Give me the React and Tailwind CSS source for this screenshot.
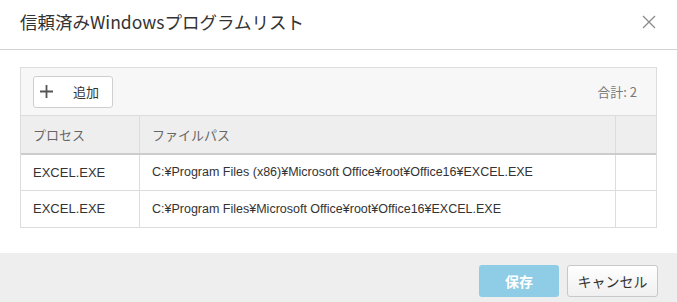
export default function App() {
  const rows = [
    ["EXCEL.EXE", "C:¥Program Files (x86)¥Microsoft Office¥root¥Office16¥EXCEL.EXE"],
    ["EXCEL.EXE", "C:¥Program Files¥Microsoft Office¥root¥Office16¥EXCEL.EXE"],
  ];
  return (
    <div
      className="w-[677px] h-[302px] bg-white flex flex-col overflow-hidden"
      style={{ fontFamily: '"Noto Sans CJK JP", "Noto Sans", sans-serif' }}
    >
      <div className="h-[50px] shrink-0 flex items-center justify-between pl-[20px] pr-[21px] border-b border-[#d2d2d2]">
        <div className="text-[17.5px] text-[#333] leading-none -mt-[5px]">信頼済みWindowsプログラムリスト</div>
        <svg width="14" height="14" viewBox="0 0 14 14" className="-mt-[6px]">
          <path d="M1 1 L13 13 M13 1 L1 13" stroke="#8a8a8a" strokeWidth="1.3" fill="none" />
        </svg>
      </div>
      <div className="flex-1 px-[20px] pt-[17px]">
        <div className="border border-[#dcdcdc]">
          <div className="h-[48px] bg-[#f7f7f7] border-b border-[#dcdcdc] flex items-center justify-between pl-[12px] pr-[19px]">
            <button className="w-[80px] h-[32px] bg-white border border-[#cfcfcf] rounded-[3px] flex items-center pl-[6px] gap-[20px] text-[13px] text-[#333]">
              <svg width="13" height="13" viewBox="0 0 13 13">
                <path d="M6.5 0 V13 M0 6.5 H13" stroke="#555" strokeWidth="1.8" fill="none" />
              </svg>
              <span className="leading-none">追加</span>
            </button>
            <div className="text-[13px] text-[#777]">合計: 2</div>
          </div>
          <div className="grid grid-cols-[119px_476px_1fr] h-[39px] bg-[#eeeeee] border-b-[2px] border-[#cccccc] text-[13px] text-[#666]">
            <div className="flex items-center pl-[12px] border-r border-[#dcdcdc]">プロセス</div>
            <div className="flex items-center pl-[12px] border-r border-[#dcdcdc]">ファイルパス</div>
            <div></div>
          </div>
          {rows.map((r, i) => (
            <div
              key={i}
              className={`grid grid-cols-[119px_476px_1fr] h-[36px] text-[#333] ${i === 0 ? "border-b border-[#dcdcdc]" : ""}`}
              style={{ fontFamily: '"Liberation Sans", "Noto Sans CJK JP", sans-serif' }}
            >
              <div className="flex items-center pl-[12px] border-r border-[#dcdcdc] text-[13px]">{r[0]}</div>
              <div className="flex items-center pl-[12px] border-r border-[#dcdcdc] text-[12.5px]">{r[1]}</div>
              <div></div>
            </div>
          ))}
        </div>
      </div>
      <div className="h-[49px] shrink-0 bg-[#eeeeee] flex justify-end items-start pt-[12px] pr-[19px] gap-[8px]">
        <button className="w-[80px] h-[32px] rounded-[3px] bg-[#8ecde5] text-white text-[14px] font-bold flex items-center justify-center">
          保存
        </button>
        <button className="w-[91px] h-[32px] rounded-[3px] border border-[#c8c8c8] bg-gradient-to-b from-white to-[#f0f0f0] text-[#333] text-[14px] flex items-center justify-center">
          キャンセル
        </button>
      </div>
    </div>
  );
}
